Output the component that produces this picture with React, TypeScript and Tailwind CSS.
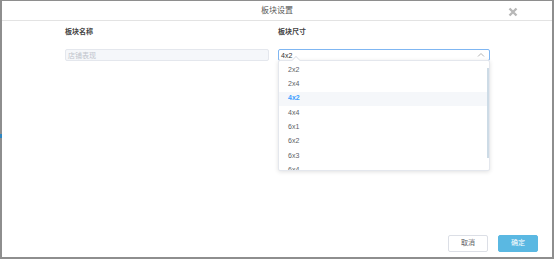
import React from "react";

const sizes = ["2x2", "2x4", "4x2", "4x4", "6x1", "6x2", "6x3", "6x4"];

const BlockSettingDialog: React.FC = () => {
  const current = "4x2";
  return (
    <div className="relative w-[554px] h-[259px] bg-white border-t border-l-2 border-r-2 border-b-2 border-[#8e8e8e] flex flex-col font-['Liberation_Sans','Noto_Sans_CJK_SC',sans-serif]">
      {/* a bit of the page behind peeking through */}
      <div className="absolute -left-[2px] top-[133px] w-[2px] h-[4px] bg-[#2e86c1]" />

      {/* header */}
      <div className="relative h-[20px] flex items-center justify-center border-b border-[#e3e3e3]">
        <span className="text-[8px] leading-none text-[#555]">板块设置</span>
        <svg
          className="absolute right-[34px] top-[6px]"
          width="10"
          height="10"
          viewBox="0 0 10 10"
        >
          <path d="M1.5 1.5 L8.5 8.5 M8.5 1.5 L1.5 8.5" stroke="#b8b8b8" strokeWidth="2.4" />
        </svg>
      </div>

      {/* body */}
      <div className="flex-1 flex pt-[6px]">
        <div className="ml-[63px] w-[204px] flex flex-col">
          <label className="text-[7px] leading-[9px] font-bold text-[#444]">板块名称</label>
          <div className="mt-[13px] h-[12px] rounded-[2px] border border-[#e4e7ed] bg-[#f5f7fa] flex items-center px-[2px]">
            <span className="text-[7px] leading-none text-[#c0c4cc]">店铺表现</span>
          </div>
        </div>
        <div className="ml-[9px] w-[212px] flex flex-col">
          <label className="text-[7px] leading-[9px] font-bold text-[#444]">板块尺寸</label>
          <div className="mt-[13px] h-[12px] rounded-[2px] border border-[#7fb6f2] bg-white flex items-center justify-between px-[2px]">
            <span className="text-[7px] leading-none text-[#333]">{current}</span>
            <svg width="8" height="6" viewBox="0 0 8 6" className="mr-[2px]">
              <path d="M1 4.5 L4 1.5 L7 4.5" fill="none" stroke="#b4b4b4" strokeWidth="1" />
            </svg>
          </div>
        </div>
      </div>

      {/* dropdown */}
      <div className="absolute left-[276px] top-[59px] w-[212px] h-[111px] bg-white border border-[#e4e7ed] shadow-[0_1px_4px_rgba(0,0,0,0.12)] rounded-[2px]">
        <div className="absolute left-[14px] -top-[4px] w-[6px] h-[6px] rotate-45 bg-white border-l border-t border-[#e4e7ed]" />
        <div className="absolute right-0 top-[7px] w-[2px] h-[90px] bg-[#cddbe6]" />
        <div className="h-full overflow-hidden pt-[2px]">
          {sizes.map((s) => (
            <div
              key={s}
              className={
                s === current
                  ? "h-[14.3px] flex items-center pl-[9px] bg-[#f5f7fa] text-[7px] font-bold text-[#409eff]"
                  : "h-[14.3px] flex items-center pl-[9px] text-[7px] text-[#606266]"
              }
            >
              {s}
            </div>
          ))}
        </div>
      </div>

      {/* footer */}
      <div className="flex justify-end gap-[10px] pr-[14px] pb-[5px]">
        <button className="w-[40px] h-[17px] rounded-[2px] border border-[#dcdfe6] bg-white text-[7px] text-[#606266]">
          取消
        </button>
        <button className="w-[40px] h-[17px] rounded-[2px] border border-[#5ab8e2] bg-[#5ab8e2] text-[7px] text-white">
          确定
        </button>
      </div>
    </div>
  );
};

export default function App() {
  return <BlockSettingDialog />;
}
